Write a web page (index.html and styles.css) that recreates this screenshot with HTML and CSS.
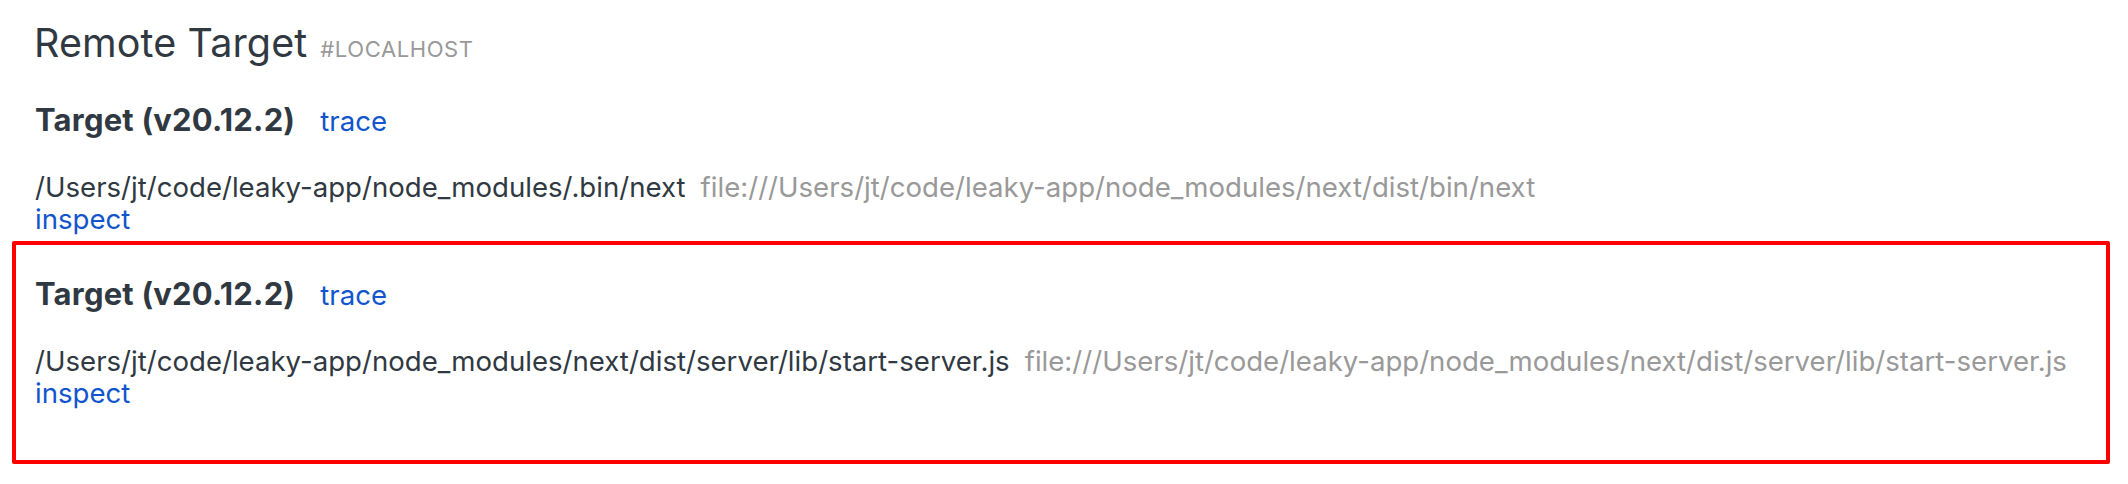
FILE: index.html
```html
<!DOCTYPE html>
<html>
<head>
<meta charset="utf-8">
<title>Remote Target</title>
<link rel="stylesheet" href="styles.css">
</head>
<body>
<div class="page">
  <div class="device-header">
    <div class="device-name">Remote Target</div>
    <span class="device-serial">#LOCALHOST</span>
  </div>
  <div class="browsers">
    <div class="browser">
      <div class="browser-header">
        <div class="browser-name">Target (v20.12.2)</div>
        <span class="action action-trace">trace</span>
      </div>
      <div class="list">
        <div class="subrow">
          <span class="name">/Users/jt/code/leaky-app/node_modules/.bin/next</span>
          <span class="url">file:///Users/jt/code/leaky-app/node_modules/next/dist/bin/next</span>
        </div>
        <div class="actions"><span class="action">inspect</span></div>
      </div>
    </div>
    <div class="browser browser-highlight">
      <div class="browser-header">
        <div class="browser-name">Target (v20.12.2)</div>
        <span class="action action-trace">trace</span>
      </div>
      <div class="list">
        <div class="subrow">
          <span class="name">/Users/jt/code/leaky-app/node_modules/next/dist/server/lib/start-server.js</span>
          <span class="url">file:///Users/jt/code/leaky-app/node_modules/next/dist/server/lib/start-server.js</span>
        </div>
        <div class="actions"><span class="action">inspect</span></div>
      </div>
    </div>
  </div>
</div>
</body>
</html>
```
FILE: styles.css
```css
html, body {
  margin: 0;
  background: #ffffff;
}

body {
  font-family: "Inter", "Noto Sans", sans-serif;
  color: #303942;
}

.page {
  padding: 19px 18px 0 12px;
}

.device-header {
  display: flex;
  align-items: baseline;
  padding-left: 22px;
  height: 48px;
}

.device-name {
  font-size: 39.5px;
  line-height: 48px;
  font-weight: 400;
  letter-spacing: 0.1px;
}

.device-serial {
  margin-left: 13px;
  font-size: 22px;
  color: #999999;
  text-transform: uppercase;
  letter-spacing: 0.6px;
}

.browser {
  border: 4px solid transparent;
  padding: 31px 19px 2px 19px;
}

.browser-highlight {
  border-color: #ff0000;
  border-radius: 2px;
  padding-bottom: 51px;
}

.browser-header {
  display: flex;
  align-items: baseline;
  height: 36px;
}

.browser-name {
  font-size: 31px;
  line-height: 36px;
  font-weight: 700;
  letter-spacing: 0.2px;
}

.action {
  color: #1155cc;
  font-size: 27.6px;
  cursor: pointer;
}

.action-trace {
  margin-left: 25px;
}

.list {
  margin-top: 33px;
}

.subrow {
  display: flex;
  align-items: baseline;
  font-size: 27.6px;
  line-height: 32px;
  white-space: nowrap;
}

.url {
  color: #999999;
  margin-left: 15px;
}

.actions {
  font-size: 27.6px;
  line-height: 32px;
}
```
